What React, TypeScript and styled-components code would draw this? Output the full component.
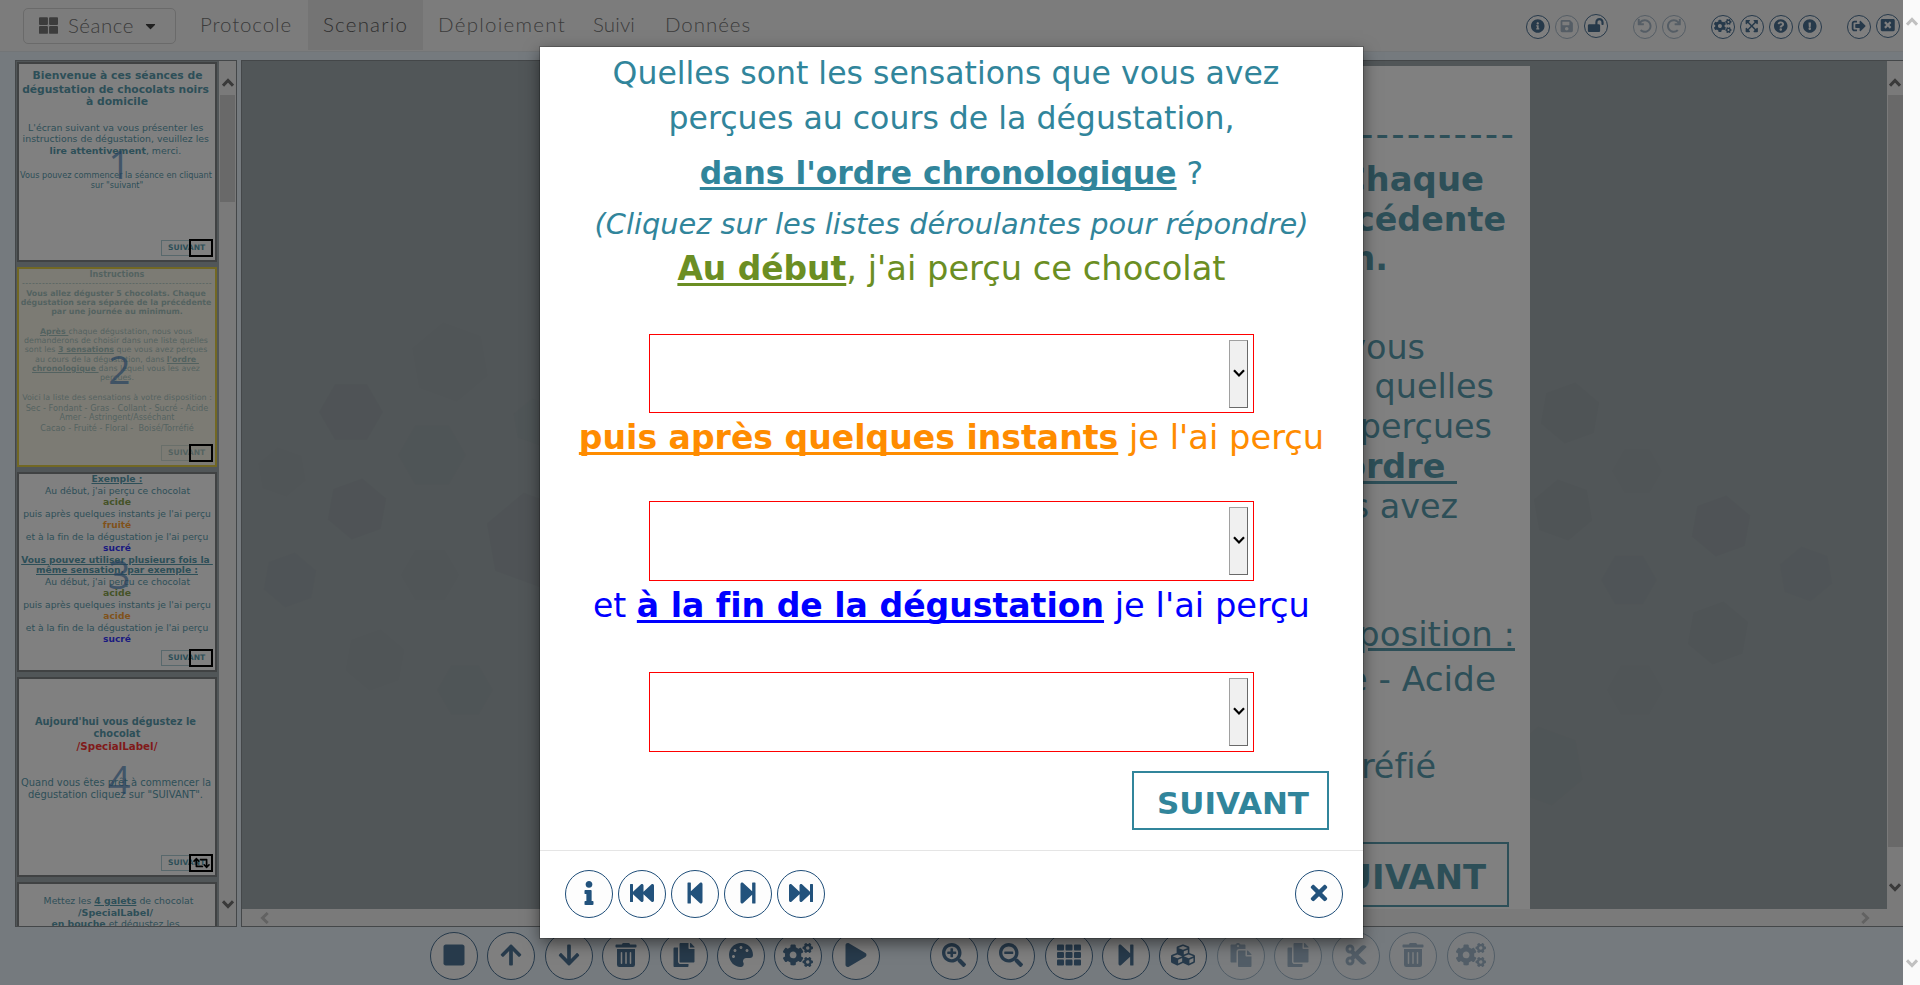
import React from 'react';
import styled, { createGlobalStyle, css } from 'styled-components';
import {
  FaArrowDown, FaArrowUp, FaCaretDown, FaCogs, FaCopy, FaCubes, FaCut, FaExclamationCircle,
  FaExpandArrowsAlt, FaFastBackward, FaFastForward, FaInfo, FaInfoCircle, FaLockOpen, FaPalette,
  FaPaste, FaPlay, FaQuestionCircle, FaRedo, FaRetweet, FaSave, FaSearchMinus, FaSearchPlus,
  FaSignOutAlt, FaSquare, FaStepBackward, FaStepForward, FaTh, FaThLarge, FaTimes, FaTrashAlt,
  FaUndo, FaWindowClose,
} from 'react-icons/fa';

const teal = '#31859b';
const navy = '#1f4e79';
const verdana = 'Verdana, "DejaVu Sans", sans-serif';
const gothic = 'Lato, sans-serif';

const GlobalStyle = createGlobalStyle`
  * { box-sizing: border-box; }
  body {
    margin: 0;
    overflow: hidden;
    font-family: ${verdana};
    font-variant-ligatures: none;
  }
`;

/* ---------- page frame ---------- */

const Page = styled.div`
  display: flex;
  width: 1920px;
  height: 985px;
`;

const Stage = styled.div`
  position: relative;
  display: flex;
  flex-direction: column;
  width: 1903px;
  background: #e4f1fa;
`;

const Backdrop = styled.div`
  position: absolute;
  inset: 0;
  padding-top: 47px;
  background: rgba(43, 43, 43, 0.6);
`;

const Workspace = styled.main`
  display: flex;
  gap: 4px;
  height: 867px;
  margin: 8px 0 0 15px;
`;

/* ---------- scroll bars ---------- */

const VBar = styled.div<{ $width: number; $bg?: string; $top: number; $bottom: number }>`
  display: flex;
  flex-direction: column;
  align-items: center;
  justify-content: space-between;
  flex: none;
  width: ${p => p.$width}px;
  background: ${p => p.$bg ?? '#f0f0f0'};
  padding: ${p => p.$top}px 0 ${p => p.$bottom}px;
`;

const VThumb = styled.div<{ $height: number }>`
  width: 15px;
  height: ${p => p.$height}px;
  margin: 7px 0 auto;
  background: #c6c6c6;
`;

const HBar = styled.div`
  display: flex;
  align-items: center;
  justify-content: space-between;
  height: 17px;
  padding: 0 16px 0 17px;
  background: #f0f0f0;
`;

type Dir = 'up' | 'down' | 'left' | 'right';
const angles: Record<Dir, number> = { up: 0, right: 90, down: 180, left: 270 };

const ChevronSvg = styled.svg<{ $dir: Dir }>`
  flex: none;
  display: block;
  transform: rotate(${p => angles[p.$dir]}deg);
`;

const Chevron = ({ dir, color, weight = 3 }: { dir: Dir; color: string; weight?: number }) => (
  <ChevronSvg $dir={dir} width="12" height="10" viewBox="0 0 12 10">
    <path d="M1 7.7 L6 2.5 L11 7.7" fill="none" stroke={color} strokeWidth={weight} />
  </ChevronSvg>
);

/* ---------- header ---------- */

const Header = styled.header`
  display: flex;
  align-items: flex-start;
  height: 52px;
  padding: 0 3px 0 23px;
  background: #f4f4f4;
  border-bottom: 1px solid #dde3e8;
  font: 300 20.5px ${gothic};
  color: #555;
`;

const SessionButton = styled.button`
  display: flex;
  align-items: center;
  width: 153px;
  height: 36px;
  margin-top: 8px;
  padding: 0 18px 2px 15px;
  border: 1px solid #c8c8c8;
  border-radius: 5px;
  background: none;
  font: inherit;
  color: inherit;
  letter-spacing: 0.5px;
  svg:first-child { width: 19px; height: 19px; margin-right: 10px; color: #555; }
  svg:last-child { width: 13px; height: 16px; margin: 2px 0 0 auto; color: #111; }
`;

const Nav = styled.nav`
  display: flex;
  margin-left: 9px;
`;

const NavItem = styled.a<{ $width: number; $spacing: number; $active?: boolean }>`
  width: ${p => p.$width}px;
  height: 50px;
  padding-left: 15px;
  line-height: 49px;
  white-space: nowrap;
  letter-spacing: ${p => p.$spacing}px;
  ${p => p.$active && css`
    background: #e0e0e0;
    color: #333;
  `}
`;

const HeaderTools = styled.div`
  display: flex;
  gap: 25px;
  margin: 15px 0 0 auto;
`;

const ToolGroup = styled.div<{ $gap: number }>`
  display: flex;
  gap: ${p => p.$gap}px;
`;

const CircleButton = styled.button<{ $size: number; $icon: number; $disabled?: boolean; $lift?: number }>`
  display: flex;
  flex: none;
  align-items: center;
  justify-content: center;
  width: ${p => p.$size}px;
  height: ${p => p.$size}px;
  margin: ${p => -(p.$lift ?? 0)}px 0 0;
  padding: 0 0 2px;
  border: 1px solid ${navy};
  border-radius: 50%;
  background: #fdfdfd;
  color: ${p => (p.$size > 30 ? '#22527c' : navy)};
  opacity: ${p => (p.$disabled ? 0.45 : 1)};
  svg { width: ${p => p.$icon * 1.25}px; height: ${p => p.$icon}px; flex: none; }
`;

/* ---------- thumbnails ---------- */

const Sidebar = styled.aside`
  display: flex;
  width: 222px;
  border: 1px solid #6a7075;
  background: #8a969b;
  overflow: hidden;
`;

const ThumbList = styled.div`
  display: flex;
  flex: 1;
  flex-direction: column;
  gap: 5px;
  padding: 1px 0 0 1px;
`;

const Thumb = styled.article<{ $selected?: boolean }>`
  position: relative;
  display: flex;
  flex: none;
  flex-direction: column;
  align-items: center;
  width: 200px;
  height: 200px;
  border: 2px solid #5f6468;
  background: #fff;
  color: ${teal};
  ${p => p.$selected && css`
    border-color: #dcc21a;
    &::after {
      content: '';
      position: absolute;
      inset: 0;
      background: rgba(237, 230, 195, 0.5);
    }
  `}
`;

const ThumbLine = styled.p<{ $lead: number; $size: number; $shift?: number; $bold?: boolean; $color?: string; $underline?: boolean; $spacing?: number }>`
  height: 10px;
  margin: ${p => p.$lead - 10}px 0 0;
  padding-left: ${p => Math.max(0, (p.$shift ?? 0) * 2)}px;
  padding-right: ${p => Math.max(0, -(p.$shift ?? 0) * 2)}px;
  font-size: ${p => p.$size}px;
  line-height: 10px;
  white-space: pre;
  letter-spacing: ${p => p.$spacing ?? 0}px;
  font-weight: ${p => (p.$bold ? 700 : 400)};
  color: ${p => p.$color ?? 'inherit'};
  text-decoration: ${p => (p.$underline ? 'underline' : 'none')};
`;

const ThumbNumber = styled.span`
  position: absolute;
  top: 75px;
  left: 0;
  width: 201px;
  text-align: center;
  font: 400 39px/50px "Open Sans", sans-serif;
  color: #24415e;
  opacity: 0.68;
  z-index: 2;
`;

const ThumbNext = styled.span`
  align-self: flex-end;
  width: 51px;
  height: 16px;
  margin: auto 3px 4px 0;
  padding-left: 6px;
  border: 1px solid #9cc4ce;
  font-size: 7.6px;
  font-weight: 700;
  line-height: 14px;
`;

const NextMarker = styled.span`
  position: absolute;
  right: 2px;
  bottom: 3px;
  z-index: 3;
  display: flex;
  align-items: center;
  justify-content: center;
  width: 24px;
  height: 18px;
  border: 2px solid #000;
  color: #000;
  svg { width: 17px; height: 14px; }
`;

type LineSpec = {
  lead: number;
  size: number;
  text: React.ReactNode;
  shift?: number;
  bold?: boolean;
  color?: string;
  underline?: boolean;
  spacing?: number;
};

const green = '#6b8e23';
const orange = '#ff8c00';
const blue = '#0000ff';

const example = (first: number, fruit: string, fruitColor: string): LineSpec[] => [
  { lead: first, size: 9.18, text: "Au début, j'ai perçu ce chocolat", shift: 0.5 },
  { lead: 11, size: 9.3, text: 'acide', bold: true, color: green },
  { lead: 12, size: 9.18, text: "puis après quelques instants je l'ai perçu" },
  { lead: 11, size: 9.1, text: fruit, bold: true, color: fruitColor },
  { lead: 12, size: 9.18, text: "et à la fin de la dégustation je l'ai perçu" },
  { lead: 11, size: 9.1, text: 'sucré', bold: true, color: blue },
];

const thumbs: { selected?: boolean; loop?: boolean; lines: LineSpec[] }[] = [
  {
    lines: [
      { lead: 17, size: 10.77, text: 'Bienvenue à ces séances de', bold: true, shift: 0.5 },
      { lead: 14, size: 10.73, text: 'dégustation de chocolats noirs', bold: true, shift: -1.5 },
      { lead: 12, size: 10.77, text: 'à domicile', bold: true },
      { lead: 26, size: 9.4, text: "L'écran suivant va vous présenter les", shift: -1.2 },
      { lead: 11, size: 9.38, text: 'instructions de dégustation, veuillez les', shift: -1.2 },
      { lead: 12, size: 9.4, text: <><b>lire attentivement</b>, merci.</>, shift: -1.7 },
      { lead: 24, size: 8.16, text: 'Vous pouvez commencer la séance en cliquant', shift: -1 },
      { lead: 10, size: 8.12, text: 'sur "suivant"' },
    ],
  },
  {
    selected: true,
    lines: [
      { lead: 10, size: 8.12, text: 'Instructions', bold: true },
      { lead: 10, size: 8, text: '-'.repeat(57), spacing: 0.45 },
      { lead: 10, size: 7.89, text: 'Vous allez déguster 5 chocolats. Chaque', bold: true, shift: -1 },
      { lead: 9, size: 7.85, text: 'dégustation sera séparée de la précédente', bold: true, shift: -1 },
      { lead: 9, size: 7.9, text: 'par une journée au minimum.', bold: true },
      { lead: 20, size: 7.9, text: <><b><u>Après </u></b>chaque dégustation, nous vous</>, shift: -1 },
      { lead: 9, size: 7.91, text: 'demanderons de choisir dans une liste quelles', shift: -1 },
      { lead: 9, size: 7.9, text: <>sont les <b><u>3 sensations</u></b> que vous avez perçues</>, shift: -1 },
      { lead: 10, size: 7.9, text: <>au cours de la dégustation, dans <b><u>l'ordre </u></b></> },
      { lead: 9, size: 7.9, text: <><b><u>chronologique </u></b>dans lequel vous les avez</>, shift: -1 },
      { lead: 9, size: 7.95, text: 'perçues.' },
      { lead: 20, size: 7.95, text: 'Voici la liste des sensations à votre disposition :' },
      { lead: 10, size: 8.23, text: 'Sec - Fondant - Gras - Collant - Sucré - Acide' },
      { lead: 10, size: 8, text: 'Amer - Astringent/Asséchant' },
      { lead: 10, size: 8.2, text: 'Cacao - Fruité - Floral -  Boisé/Torréfié' },
    ],
  },
  {
    lines: [
      { lead: 10, size: 9.22, text: 'Exemple :', bold: true, underline: true },
      ...example(12, 'fruité', orange),
      { lead: 12, size: 9.11, text: 'Vous pouvez utiliser plusieurs fois la ', bold: true, underline: true },
      { lead: 10, size: 9.13, text: 'même sensation, par exemple :', bold: true, underline: true },
      ...example(12, 'acide', orange),
    ],
  },
  {
    loop: true,
    lines: [
      { lead: 48, size: 9.83, text: "Aujourd'hui vous dégustez le", bold: true, shift: -1.5 },
      { lead: 12, size: 9.86, text: 'chocolat', bold: true },
      { lead: 12, size: 10.3, text: '/SpecialLabel/', bold: true, color: '#f00' },
      { lead: 37, size: 9.91, text: 'Quand vous êtes prêt à commencer la', shift: -1 },
      { lead: 12, size: 9.98, text: 'dégustation cliquez sur "SUIVANT".', shift: -1.5 },
    ],
  },
  {
    lines: [
      { lead: 22, size: 9.3, text: <>Mettez les <b><u>4 galets</u></b> de chocolat</>, shift: 1.5 },
      { lead: 12, size: 9.56, text: '/SpecialLabel/', bold: true, shift: -1.5 },
      { lead: 11, size: 9.3, text: <><b>en bouche</b> et dégustez les</>, shift: -1.5 },
    ],
  },
];

/* ---------- slide editor ---------- */

const Editor = styled.section`
  display: flex;
  flex: 1;
  border: 1px solid #6a7075;
  border-right: 0;
`;

const EditorColumn = styled.div`
  display: flex;
  flex: 1;
  flex-direction: column;
`;

const Canvas = styled.div`
  position: relative;
  display: flex;
  justify-content: center;
  flex: 1;
  min-height: 0;
  padding: 5px 1px 0 0;
  background: #8a969b;
  overflow: hidden;
`;

const Pattern = styled.svg`
  position: absolute;
  inset: 0;
`;

const Slide = styled.article`
  position: relative;
  display: flex;
  flex-direction: column;
  width: 932px;
  height: 932px;
  background: #fff;
  color: ${teal};
  overflow: hidden;
`;

const SlideLine = styled.p<{ $lead: number; $right: number; $bold?: boolean; $size?: number; $spacing?: number; $underline?: boolean }>`
  flex: none;
  height: 38px;
  margin: ${p => p.$lead - 38}px ${p => p.$right}px 0 0;
  line-height: 38px;
  white-space: pre;
  align-self: flex-end;
  font-size: ${p => p.$size ?? 33.4}px;
  font-weight: ${p => (p.$bold ? 700 : 400)};
  letter-spacing: ${p => p.$spacing ?? 0}px;
  text-decoration: ${p => (p.$underline ? 'underline' : 'none')};
`;

const NextButton = styled.button<{ $width: number; $height: number; $size: number }>`
  flex: none;
  align-self: flex-end;
  width: ${p => p.$width}px;
  height: ${p => p.$height}px;
  padding: 5px 18px 0 0;
  border: 2px solid ${teal};
  background: none;
  color: ${teal};
  font: 700 ${p => p.$size}px ${verdana};
  text-align: right;
`;

const EditorNext = styled(NextButton)`
  margin: 56px 21px 0 0;
  padding-right: 21px;
`;

const hexagons: [number, number, number, number][] = [
  [351, 412, 32, 0.07], [282, 472, 25, 0.025], [357, 509, 31, 0.07], [432, 455, 34, 0.035],
  [532, 540, 48, 0.07], [290, 580, 28, 0.045], [430, 575, 29, 0.03], [450, 362, 40, 0.025],
  [375, 660, 31, 0.03], [465, 690, 28, 0.05], [536, 422, 24, 0.05],
  [1570, 413, 31, 0.06], [1637, 471, 25, 0.02], [1563, 510, 31, 0.06], [1721, 526, 31, 0.07],
  [1629, 580, 28, 0.04], [1806, 574, 28, 0.045], [1718, 633, 32, 0.06], [1635, 690, 28, 0.03],
  [1545, 766, 40, 0.035],
];

const hexPoints = (cx: number, cy: number, r: number, tilt: number) =>
  Array.from({ length: 6 }, (_, i) => {
    const a = (Math.PI / 3) * i + tilt;
    return `${(cx + r * Math.cos(a)).toFixed(1)},${(cy + r * Math.sin(a)).toFixed(1)}`;
  }).join(' ');

/* ---------- bottom toolbar ---------- */

const Toolbar = styled.footer`
  display: flex;
  gap: 50px;
  padding: 5px 0 0 430px;
`;

/* ---------- preview dialog ---------- */

const Dialog = styled.div`
  display: flex;
  flex-direction: column;
  width: 823px;
  height: 891px;
  margin: 0 auto;
  background: #fff;
  box-shadow: 0 0 0 1px rgba(0, 0, 0, 0.2), 0 5px 15px rgba(0, 0, 0, 0.5);
`;

const Question = styled.div`
  display: flex;
  flex: none;
  flex-direction: column;
  align-items: center;
  height: 803px;
  color: ${teal};
`;

const QuestionLine = styled.p<{ $top: number; $size: number; $color?: string; $shift?: number; $italic?: boolean }>`
  height: 40px;
  margin: ${p => p.$top}px 0 0;
  padding-left: ${p => Math.max(0, (p.$shift ?? 0) * 2)}px;
  padding-right: ${p => Math.max(0, -(p.$shift ?? 0) * 2)}px;
  line-height: 40px;
  white-space: pre;
  font-size: ${p => p.$size}px;
  font-style: ${p => (p.$italic ? 'italic' : 'normal')};
  color: ${p => p.$color ?? 'inherit'};
`;

const Light = styled.span`
  font-size: 33.7px;
`;

const Strong = styled.span`
  font-weight: 700;
  text-decoration: underline;
  text-decoration-thickness: 3px;
  text-underline-offset: 3px;
  text-decoration-skip-ink: none;
`;

const SelectBox = styled.div<{ $top: number; $height: number }>`
  display: flex;
  flex: none;
  justify-content: flex-end;
  width: 605px;
  height: ${p => p.$height}px;
  margin-top: ${p => p.$top}px;
  padding: 5px;
  border: 1px solid #f00;
`;

const SelectArrow = styled.span`
  display: flex;
  align-items: center;
  justify-content: center;
  width: 19px;
  height: 68px;
  border: 1px solid;
  border-color: #a0a0a0 #696969 #696969 #a0a0a0;
  background: #f0f0f0;
  padding-bottom: 3px;
`;

const DialogNext = styled(NextButton)`
  margin: 19px 34px 0 0;
`;

const DialogFooter = styled.div`
  display: flex;
  justify-content: space-between;
  flex: 1;
  padding: 19px 20px 0 25px;
  border-top: 1px solid #e5e5e5;
`;

const Select = ({ top, height }: { top: number; height: number }) => (
  <SelectBox $top={top} $height={height}>
    <SelectArrow>
      <Chevron dir="down" color="#000" weight={2.2} />
    </SelectArrow>
  </SelectBox>
);

type Tool = { icon: React.ComponentType; off?: boolean; lift?: number };

const headerTools: Tool[][] = [
  [{ icon: FaInfoCircle }, { icon: FaSave, off: true }, { icon: FaLockOpen, lift: 1 }],
  [{ icon: FaUndo, off: true }, { icon: FaRedo, off: true }],
  [{ icon: FaCogs }, { icon: FaExpandArrowsAlt }, { icon: FaQuestionCircle }, { icon: FaExclamationCircle }],
  [{ icon: FaSignOutAlt }, { icon: FaWindowClose, lift: 1 }],
];

const bottomTools: Tool[][] = [
  [FaSquare, FaArrowUp, FaArrowDown, FaTrashAlt, FaCopy, FaPalette, FaCogs, FaPlay].map(icon => ({ icon })),
  [
    { icon: FaSearchPlus }, { icon: FaSearchMinus }, { icon: FaTh }, { icon: FaStepForward }, { icon: FaCubes },
    { icon: FaPaste, off: true }, { icon: FaCopy, off: true }, { icon: FaCut, off: true },
    { icon: FaTrashAlt, off: true }, { icon: FaCogs, off: true },
  ],
];

const playerTools: Tool[] = [FaInfo, FaFastBackward, FaStepBackward, FaStepForward, FaFastForward].map(icon => ({ icon }));

const Tools = ({ tools, size, icon, gap }: { tools: Tool[]; size: number; icon: number; gap: number }) => (
  <ToolGroup $gap={gap}>
    {tools.map(({ icon: Icon, off, lift }, i) => (
      <CircleButton key={i} $size={size} $icon={icon} $disabled={off} $lift={lift}>
        <Icon />
      </CircleButton>
    ))}
  </ToolGroup>
);

export default function App() {
  return (
    <>
      <GlobalStyle />
      <Page>
        <Stage>
          <Header>
            <SessionButton><FaThLarge />Séance<FaCaretDown /></SessionButton>
            <Nav>
              <NavItem $width={123} $spacing={0.87}>Protocole</NavItem>
              <NavItem $width={115} $spacing={1.2} $active>Scenario</NavItem>
              <NavItem $width={155} $spacing={1.27}>Déploiement</NavItem>
              <NavItem $width={72} $spacing={0.12}>Suivi</NavItem>
              <NavItem $width={120} $spacing={0.93}>Données</NavItem>
            </Nav>
            <HeaderTools>
              {headerTools.map((tools, i) => <Tools key={i} tools={tools} size={24} icon={14} gap={5} />)}
            </HeaderTools>
          </Header>

          <Workspace>
            <Sidebar>
              <ThumbList>
                {thumbs.map((thumb, i) => (
                  <Thumb key={i} $selected={thumb.selected}>
                    {thumb.lines.map((l, j) => (
                      <ThumbLine key={j} $lead={l.lead} $size={l.size} $shift={l.shift} $bold={l.bold} $color={l.color} $underline={l.underline} $spacing={l.spacing}>
                        {l.text}
                      </ThumbLine>
                    ))}
                    {i < 4 && (
                      <>
                        <ThumbNext>SUIVANT</ThumbNext>
                        <ThumbNumber>{i + 1}</ThumbNumber>
                        <NextMarker>{thumb.loop && <FaRetweet />}</NextMarker>
                      </>
                    )}
                  </Thumb>
                ))}
              </ThumbList>
              <VBar $width={17} $top={17} $bottom={17}>
                <Chevron dir="up" color="#505050" />
                <VThumb $height={107} />
                <Chevron dir="down" color="#505050" />
              </VBar>
            </Sidebar>

            <Editor>
              <EditorColumn>
                <Canvas>
                  <Pattern width="1646" height="848" viewBox="242 61 1646 848">
                    {hexagons.map(([x, y, r, o], i) => (
                      <polygon key={i} points={hexPoints(x, y, r, (i % 3) * 0.35)} fill="#10303a" opacity={o * 0.65} />
                    ))}
                  </Pattern>
                  <Slide>
                    <SlideLine $lead={54} $right={350} $bold>Instructions</SlideLine>
                    <SlideLine $lead={34} $right={14} $size={37} $spacing={2.25}>{'-'.repeat(57)}</SlideLine>
                    <SlideLine $lead={45} $right={46} $bold $size={33.9}>Vous allez déguster 5 chocolats. Chaque</SlideLine>
                    <SlideLine $lead={40} $right={24} $bold $size={33.3}>dégustation sera séparée de la précédente</SlideLine>
                    <SlideLine $lead={39} $right={142} $bold>par une journée au minimum.</SlideLine>
                    <SlideLine $lead={89} $right={105}><Strong>Après </Strong>chaque dégustation, nous vous</SlideLine>
                    <SlideLine $lead={39} $right={36}>demanderons de choisir dans une liste quelles</SlideLine>
                    <SlideLine $lead={40} $right={38}>sont les <Strong>3 sensations</Strong> que vous avez perçues</SlideLine>
                    <SlideLine $lead={40} $right={73}>au cours de la dégustation, dans <Strong>l'ordre </Strong></SlideLine>
                    <SlideLine $lead={40} $right={72}><Strong>chronologique </Strong>dans lequel vous les avez</SlideLine>
                    <SlideLine $lead={38} $right={400}>perçues.</SlideLine>
                    <SlideLine $lead={89} $right={15} $size={34} $underline>Voici la liste des sensations à votre disposition :</SlideLine>
                    <SlideLine $lead={45} $right={34} $size={34.3}>Sec - Fondant - Gras - Collant - Sucré - Acide</SlideLine>
                    <SlideLine $lead={44} $right={196}>Amer - Astringent/Asséchant</SlideLine>
                    <SlideLine $lead={44} $right={94}>Cacao - Fruité - Floral -  Boisé/Torréfié</SlideLine>
                    <EditorNext $width={233} $height={65} $size={33.8}>SUIVANT</EditorNext>
                  </Slide>
                </Canvas>
                <HBar>
                  <Chevron dir="left" color="#b4b4b4" />
                  <Chevron dir="right" color="#b4b4b4" />
                </HBar>
              </EditorColumn>
              <VBar $width={16} $top={17} $bottom={34}>
                <Chevron dir="up" color="#505050" />
                <VThumb $height={752} />
                <Chevron dir="down" color="#505050" />
              </VBar>
            </Editor>
          </Workspace>

          <Toolbar>
            {bottomTools.map((tools, i) => <Tools key={i} tools={tools} size={48} icon={24} gap={i ? 9.45 : 9.4} />)}
          </Toolbar>

          <Backdrop>
            <Dialog>
              <Question>
                <QuestionLine $top={6} $size={31.55} $shift={-5.5}>Quelles sont les sensations que vous avez</QuestionLine>
                <QuestionLine $top={5} $size={31.55}>perçues au cours de la dégustation,</QuestionLine>
                <QuestionLine $top={15} $size={31.4}><Strong>dans l'ordre chronologique</Strong> ?</QuestionLine>
                <QuestionLine $top={11} $size={28.85} $italic>(Cliquez sur les listes déroulantes pour répondre)</QuestionLine>
                <QuestionLine $top={5} $size={32.9} $color={green}><Strong>Au début</Strong><Light>, j'ai perçu ce chocolat</Light></QuestionLine>
                <Select top={45} height={79} />
                <QuestionLine $top={5} $size={33.09} $color={orange}><Strong>puis après quelques instants</Strong><Light> je l'ai perçu</Light></QuestionLine>
                <Select top={43} height={80} />
                <QuestionLine $top={5} $size={33.08} $color={blue}>et <Strong>à la fin de la dégustation</Strong><Light> je l'ai perçu</Light></QuestionLine>
                <Select top={46} height={80} />
                <DialogNext $width={197} $height={59} $size={31}>SUIVANT</DialogNext>
              </Question>
              <DialogFooter>
                <Tools tools={playerTools} size={48} icon={24} gap={5} />
                <CircleButton $size={48} $icon={24}><FaTimes /></CircleButton>
              </DialogFooter>
            </Dialog>
          </Backdrop>
        </Stage>
        <VBar $width={17} $bg="#fafafa" $top={17} $bottom={17}>
          <Chevron dir="up" color="#c0c0c0" />
          <Chevron dir="down" color="#c0c0c0" />
        </VBar>
      </Page>
    </>
  );
}
